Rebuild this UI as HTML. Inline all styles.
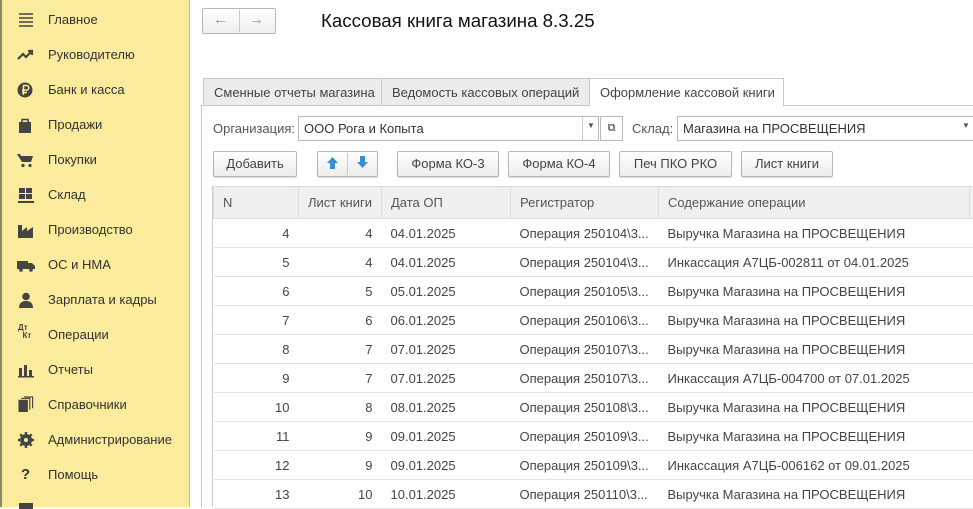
<!DOCTYPE html>
<html><head><meta charset="utf-8"><style>
*{box-sizing:border-box;margin:0;padding:0}
body{width:973px;height:507px;overflow:hidden;background:#fff;font-family:"Liberation Sans",Arial,sans-serif;font-size:13px;color:#333;position:relative}
.abs{position:absolute}
#side{left:0;top:0;width:190px;height:507px;background:#fbeb9c;border-right:1px solid #c9bd7a}
#strip{left:0;top:0;width:2px;height:507px;background:#8a8a6a}
.it{position:absolute;left:48px;font-size:13px;color:#333;line-height:16px}
.ic{position:absolute;left:17px;width:18px;height:16px}
.btn{position:absolute;height:26px;border:1px solid #b8b8b8;border-radius:2px;background:linear-gradient(#fff,#ececec);text-align:center;line-height:24px;color:#444;font-size:13px;box-shadow:0 1px 1px rgba(0,0,0,.15)}
.tab{position:absolute;top:78px;height:28px;border:1px solid #c8c8c8;background:#ececec;line-height:27px;padding-left:10px;color:#444}
.fld{position:absolute;height:25px;border:1px solid #b8b8b8;background:#fff;line-height:23px;padding-left:5px;color:#333}
table{position:absolute;left:213px;top:186px;border-collapse:collapse;width:770px;table-layout:fixed}
td,th{height:29px;font-weight:normal;font-size:13px;color:#444;border-bottom:1px solid #e4e4e4;white-space:nowrap;overflow:hidden;padding:0 9px}
th{background:#f2eff2;height:32px;text-align:left;color:#555;border:1px solid #ddd}
td.r{text-align:right}
</style></head><body>
<div id="side" class="abs">
<svg class="ic" style="top:12px" viewBox="0 0 18 16"><path d="M2 2h14M2 6h14M2 10h14M2 14h14" stroke="#444" stroke-width="1.4"/></svg>
<div class="it" style="top:12px">Главное</div>
<svg class="ic" style="top:47px" viewBox="0 0 18 16"><path d="M1 12l5-5 3 3 6-6M11 4h4v4" stroke="#444" stroke-width="2.2" fill="none"/></svg>
<div class="it" style="top:47px">Руководителю</div>
<svg class="ic" style="top:82px" viewBox="0 0 18 16"><circle cx="8" cy="8" r="7.5" fill="#444"/><path d="M6.5 13V3.5h3a2.3 2.3 0 010 4.6h-4.5M5 10.5h5" stroke="#fbeb9c" stroke-width="1.5" fill="none"/></svg>
<div class="it" style="top:82px">Банк и касса</div>
<svg class="ic" style="top:117px" viewBox="0 0 18 16"><path d="M2 5h12v11H2z" fill="#444"/><path d="M5 6V2.5h6V6" stroke="#444" stroke-width="1.6" fill="none"/></svg>
<div class="it" style="top:117px">Продажи</div>
<svg class="ic" style="top:152px" viewBox="0 0 18 16"><path d="M0 2h3l1 2h12l-2 6H5z" fill="#444"/><circle cx="6" cy="13.5" r="1.6" fill="#444"/><circle cx="13" cy="13.5" r="1.6" fill="#444"/></svg>
<div class="it" style="top:152px">Покупки</div>
<svg class="ic" style="top:187px" viewBox="0 0 18 16"><path d="M2 1h6v5H2zM9 1h6v5H9zM2 7h6v5H2zM9 7h6v5H9zM1 14h16v2H1z" fill="#444"/></svg>
<div class="it" style="top:187px">Склад</div>
<svg class="ic" style="top:222px" viewBox="0 0 18 16"><path d="M1 16V3h4v6l5-4v4l6-4v11z" fill="#444"/></svg>
<div class="it" style="top:222px">Производство</div>
<svg class="ic" style="top:257px" viewBox="0 0 18 16"><path d="M0 4h11v8H0zM11 6h4l3 3v3h-7z" fill="#444"/><circle cx="4" cy="13" r="1.8" fill="#444"/><circle cx="14" cy="13" r="1.8" fill="#444"/></svg>
<div class="it" style="top:257px">ОС и НМА</div>
<svg class="ic" style="top:292px" viewBox="0 0 18 16"><circle cx="9" cy="4.5" r="3.8" fill="#444"/><path d="M2 16c0-5 3-7 7-7s7 2 7 7z" fill="#444"/></svg>
<div class="it" style="top:292px">Зарплата и кадры</div>
<div class="abs" style="left:18px;top:324px;font-size:8px;font-weight:bold;color:#444;line-height:8px">Дт<br>&nbsp;&nbsp;Кт</div>
<div class="it" style="top:327px">Операции</div>
<svg class="ic" style="top:362px" viewBox="0 0 18 16"><path d="M2 6h3v8H2zM7 3h3v11H7zM12 8h3v6h-3zM1 14h16v1.5H1z" fill="#444"/></svg>
<div class="it" style="top:362px">Отчеты</div>
<svg class="ic" style="top:396px" viewBox="0 0 18 17"><path d="M1 4h10v13H1z" fill="#444"/><path d="M4 2.5h9v12M7 1h9v12" stroke="#444" stroke-width="1.2" fill="none"/></svg>
<div class="it" style="top:397px">Справочники</div>
<svg class="ic" style="top:432px" viewBox="0 0 18 16"><circle cx="9" cy="8" r="4.5" fill="none" stroke="#444" stroke-width="3"/><path d="M9 0v16M1 8h16M3.3 2.3l11.4 11.4M14.7 2.3L3.3 13.7" stroke="#444" stroke-width="2.4"/><circle cx="9" cy="8" r="2" fill="#fbeb9c"/></svg>
<div class="it" style="top:432px">Администрирование</div>
<div class="abs" style="left:21px;top:466px;font-size:15px;font-weight:bold;color:#333">?</div>
<div class="it" style="top:467px">Помощь</div>
<div class="abs" style="left:19px;top:503px;width:14px;height:6px;background:#444"></div>
</div>
<div id="strip" class="abs"></div>
<div class="abs" style="left:202px;top:8px;width:74px;height:26px;border:1px solid #b8b8b8;border-radius:2px;background:linear-gradient(#fff,#eee)"></div>
<div class="abs" style="left:239px;top:10px;width:1px;height:22px;background:#ccc"></div>
<div class="abs" style="left:213px;top:11px;color:#999;font-size:15px">&#8592;</div>
<div class="abs" style="left:249px;top:11px;color:#999;font-size:15px">&#8594;</div>
<div class="abs" style="left:321px;top:10px;font-size:18.7px;color:#111">Кассовая книга магазина 8.3.25</div>
<div class="abs" style="left:201px;top:105px;width:1px;height:402px;background:#c8c8c8"></div>
<div class="abs" style="left:201px;top:105px;width:772px;height:1px;background:#c8c8c8"></div>
<div class="tab" style="left:203px;width:179px">Сменные отчеты магазина</div>
<div class="tab" style="left:381px;width:209px">Ведомость кассовых операций</div>
<div class="tab" style="left:589px;width:195px;background:#fff;border-bottom-color:#fff;height:29px">Оформление кассовой книги</div>
<div class="abs" style="left:213px;top:121px;color:#555">Организация:</div>
<div class="fld" style="left:298px;top:116px;width:301px">ООО Рога и Копыта</div>
<div class="abs" style="left:582px;top:117px;width:1px;height:23px;background:#ccc"></div>
<div class="abs" style="left:587px;top:121px;font-size:8px;color:#555">▼</div>
<div class="fld" style="left:600px;top:116px;width:23px;padding:0;text-align:center;font-size:11px">⧉</div>
<div class="abs" style="left:632px;top:121px;color:#555">Склад:</div>
<div class="fld" style="left:677px;top:116px;width:300px">Магазина на ПРОСВЕЩЕНИЯ</div>
<div class="abs" style="left:962px;top:121px;font-size:8px;color:#555">▼</div>
<div class="btn" style="left:213px;top:151px;width:84px">Добавить</div>
<div class="btn" style="left:317px;top:151px;width:61px"></div>
<div class="abs" style="left:347px;top:153px;width:1px;height:22px;background:#ccc"></div>
<svg class="abs" style="left:326px;top:156px" width="13" height="14" viewBox="0 0 13 14"><path d="M6.5 1L12 7H9v6H4V7H1z" fill="#3a8fd0"/></svg>
<svg class="abs" style="left:356px;top:155px" width="13" height="14" viewBox="0 0 13 14"><path d="M6.5 13L12 7H9V1H4v6H1z" fill="#3a8fd0"/></svg>
<div class="btn" style="left:397px;top:151px;width:102px">Форма КО-3</div>
<div class="btn" style="left:508px;top:151px;width:102px">Форма КО-4</div>
<div class="btn" style="left:619px;top:151px;width:113px">Печ ПКО РКО</div>
<div class="btn" style="left:741px;top:151px;width:92px">Лист книги</div>
<table>
<colgroup><col style="width:85px"><col style="width:83px"><col style="width:129px"><col style="width:148px"><col style="width:311px"><col></colgroup>
<tr><th>N</th><th style="text-align:right">Лист книги</th><th>Дата ОП</th><th>Регистратор</th><th>Содержание операции</th><th></th></tr>
<tr><td class="r">4</td><td class="r">4</td><td>04.01.2025</td><td>Операция 250104\3...</td><td>Выручка Магазина на ПРОСВЕЩЕНИЯ</td><td></td></tr>
<tr><td class="r">5</td><td class="r">4</td><td>04.01.2025</td><td>Операция 250104\3...</td><td>Инкассация А7ЦБ-002811 от 04.01.2025</td><td></td></tr>
<tr><td class="r">6</td><td class="r">5</td><td>05.01.2025</td><td>Операция 250105\3...</td><td>Выручка Магазина на ПРОСВЕЩЕНИЯ</td><td></td></tr>
<tr><td class="r">7</td><td class="r">6</td><td>06.01.2025</td><td>Операция 250106\3...</td><td>Выручка Магазина на ПРОСВЕЩЕНИЯ</td><td></td></tr>
<tr><td class="r">8</td><td class="r">7</td><td>07.01.2025</td><td>Операция 250107\3...</td><td>Выручка Магазина на ПРОСВЕЩЕНИЯ</td><td></td></tr>
<tr><td class="r">9</td><td class="r">7</td><td>07.01.2025</td><td>Операция 250107\3...</td><td>Инкассация А7ЦБ-004700 от 07.01.2025</td><td></td></tr>
<tr><td class="r">10</td><td class="r">8</td><td>08.01.2025</td><td>Операция 250108\3...</td><td>Выручка Магазина на ПРОСВЕЩЕНИЯ</td><td></td></tr>
<tr><td class="r">11</td><td class="r">9</td><td>09.01.2025</td><td>Операция 250109\3...</td><td>Выручка Магазина на ПРОСВЕЩЕНИЯ</td><td></td></tr>
<tr><td class="r">12</td><td class="r">9</td><td>09.01.2025</td><td>Операция 250109\3...</td><td>Инкассация А7ЦБ-006162 от 09.01.2025</td><td></td></tr>
<tr><td class="r">13</td><td class="r">10</td><td>10.01.2025</td><td>Операция 250110\3...</td><td>Выручка Магазина на ПРОСВЕЩЕНИЯ</td><td></td></tr>
</table>
<div class="abs" style="left:212px;top:186px;width:1px;height:321px;background:#ccc"></div>
</body></html>
